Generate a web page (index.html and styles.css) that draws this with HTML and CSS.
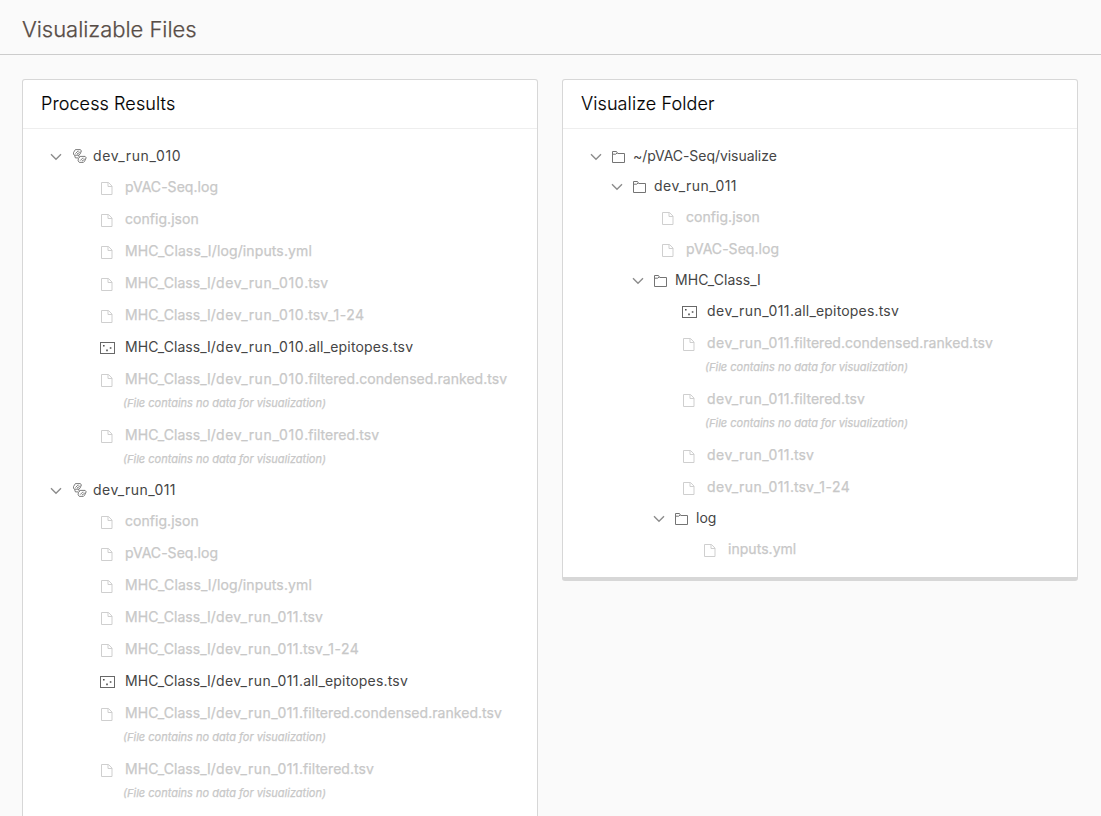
FILE: index.html
```
<!DOCTYPE html>
<html lang="en">
<head>
<meta charset="utf-8">
<title>Visualizable Files</title>
<link rel="stylesheet" href="styles.css">
</head>
<body>
<svg class="sprite" aria-hidden="true">
  <symbol id="chevron" viewBox="0 0 12 8"><path d="M1 1.3 6 6.3l5-5" fill="none" stroke="#8c8c8c" stroke-width="1.4"/></symbol>
  <symbol id="folder" viewBox="0 0 13 12"><path d="M.5 11.5V.5h4l1.2 2h6.8v9zM.5 3.2h3.2l1.4-1.2" fill="none" stroke="#747474"/></symbol>
  <symbol id="file" viewBox="0 0 12 13"><path d="M.5.5h7l3.5 3.6v8.4H.5zM7 .5v4h4" fill="none" stroke="#cfcfcf"/></symbol>
  <symbol id="plot" viewBox="0 0 15 12"><rect x=".5" y=".5" width="14" height="11" fill="none" stroke="#686868"/><path d="M3 3h1.6v1.6H3zM9.8 5.2h1.6v1.6H9.8zM6.2 7.6h1.6v1.6H6.2z" fill="#505050"/></symbol>
  <symbol id="link" viewBox="0 0 14 14"><g fill="none" stroke="#5c5c5c" stroke-width=".8"><path d="M.6 3.4 2.4.6h5l1 1.4-1.4 3.2-1.3 1H1.4L.4 5zM2.4 4.6l2.4-2.4h.9M4 4.8h1l2-2.2"/><path d="M5.4 9.6 7.2 7.4h4.9l1.1 1.4-1.6 3.4-1.2 1.2H6.3l-1.2-1.6zM7.2 11.6l2.4-2.4h.9M8.9 11.8h1l2-2.2M5.6 6.2l.7 2M1.6 6.4l.8 2.5h2.8"/></g></symbol>
</svg>

<header class="page-header"><h1 class="page-title">Visualizable Files</h1></header>

<main class="panels">
  <section class="panel">
    <h2 class="panel-title">Process Results</h2>
    <div class="tree">
      <div class="dir"><svg class="chevron"><use href="#chevron"/></svg><svg class="link"><use href="#link"/></svg><span class="label"><span class="run-a">dev_run_010</span></span></div>
      <ul class="files">
        <li class="file"><svg class="doc"><use href="#file"/></svg><span class="label">pVAC-Seq.log</span></li>
        <li class="file"><svg class="doc"><use href="#file"/></svg><span class="label">config.json</span></li>
        <li class="file"><svg class="doc"><use href="#file"/></svg><span class="label mhc">MHC_Class_I/log/inputs.yml</span></li>
        <li class="file"><svg class="doc"><use href="#file"/></svg><span class="label">MHC_Class_I/<span class="run-a">dev_run_010</span>.tsv</span></li>
        <li class="file"><svg class="doc"><use href="#file"/></svg><span class="label">MHC_Class_I/<span class="run-a">dev_run_010</span>.tsv<span class="range">_1-24</span></span></li>
        <li class="file active"><svg class="plot"><use href="#plot"/></svg><span class="label">MHC_Class_I/<span class="run-a">dev_run_010</span><span class="epitopes">.all_epitopes.tsv</span></span></li>
        <li class="file"><svg class="doc"><use href="#file"/></svg><span class="label">MHC_Class_I/<span class="run-a">dev_run_010</span>.filtered.condensed.ranked.tsv</span></li>
        <li class="note"><span>(File contains no data for visualization)</span></li>
        <li class="file"><svg class="doc"><use href="#file"/></svg><span class="label">MHC_Class_I/<span class="run-a">dev_run_010</span>.filtered.tsv</span></li>
        <li class="note"><span>(File contains no data for visualization)</span></li>
      </ul>
      <div class="dir"><svg class="chevron"><use href="#chevron"/></svg><svg class="link"><use href="#link"/></svg><span class="label"><span class="run-b">dev_run_011</span></span></div>
      <ul class="files">
        <li class="file"><svg class="doc"><use href="#file"/></svg><span class="label">config.json</span></li>
        <li class="file"><svg class="doc"><use href="#file"/></svg><span class="label">pVAC-Seq.log</span></li>
        <li class="file"><svg class="doc"><use href="#file"/></svg><span class="label mhc">MHC_Class_I/log/inputs.yml</span></li>
        <li class="file"><svg class="doc"><use href="#file"/></svg><span class="label">MHC_Class_I/<span class="run-b">dev_run_011</span>.tsv</span></li>
        <li class="file"><svg class="doc"><use href="#file"/></svg><span class="label">MHC_Class_I/<span class="run-b">dev_run_011</span>.tsv<span class="range">_1-24</span></span></li>
        <li class="file active"><svg class="plot"><use href="#plot"/></svg><span class="label">MHC_Class_I/<span class="run-b">dev_run_011</span><span class="epitopes">.all_epitopes.tsv</span></span></li>
        <li class="file"><svg class="doc"><use href="#file"/></svg><span class="label">MHC_Class_I/<span class="run-b">dev_run_011</span>.filtered.condensed.ranked.tsv</span></li>
        <li class="note"><span>(File contains no data for visualization)</span></li>
        <li class="file"><svg class="doc"><use href="#file"/></svg><span class="label">MHC_Class_I/<span class="run-b">dev_run_011</span>.filtered.tsv</span></li>
        <li class="note"><span>(File contains no data for visualization)</span></li>
      </ul>
    </div>
  </section>

  <section class="panel">
    <h2 class="panel-title">Visualize Folder</h2>
    <div class="tree">
      <div class="dir"><svg class="chevron"><use href="#chevron"/></svg><svg class="folder"><use href="#folder"/></svg><span class="label root">~/pVAC-Seq/visualize</span></div>
      <div class="branch">
        <div class="dir"><svg class="chevron"><use href="#chevron"/></svg><svg class="folder"><use href="#folder"/></svg><span class="label"><span class="run-b">dev_run_011</span></span></div>
        <ul class="files">
          <li class="file"><svg class="doc"><use href="#file"/></svg><span class="label">config.json</span></li>
          <li class="file"><svg class="doc"><use href="#file"/></svg><span class="label">pVAC-Seq.log</span></li>
        </ul>
        <div class="branch">
          <div class="dir"><svg class="chevron"><use href="#chevron"/></svg><svg class="folder"><use href="#folder"/></svg><span class="label">MHC_Class_I</span></div>
          <ul class="files">
            <li class="file active"><svg class="plot"><use href="#plot"/></svg><span class="label"><span class="run-b">dev_run_011</span><span class="epitopes">.all_epitopes.tsv</span></span></li>
            <li class="file"><svg class="doc"><use href="#file"/></svg><span class="label"><span class="run-b">dev_run_011</span>.filtered.condensed.ranked.tsv</span></li>
            <li class="note"><span>(File contains no data for visualization)</span></li>
            <li class="file"><svg class="doc"><use href="#file"/></svg><span class="label"><span class="run-b">dev_run_011</span>.filtered.tsv</span></li>
            <li class="note"><span>(File contains no data for visualization)</span></li>
            <li class="file"><svg class="doc"><use href="#file"/></svg><span class="label"><span class="run-b">dev_run_011</span>.tsv</span></li>
            <li class="file"><svg class="doc"><use href="#file"/></svg><span class="label"><span class="run-b">dev_run_011</span>.tsv<span class="range">_1-24</span></span></li>
          </ul>
          <div class="branch">
            <div class="dir"><svg class="chevron"><use href="#chevron"/></svg><svg class="folder"><use href="#folder"/></svg><span class="label">log</span></div>
            <ul class="files">
              <li class="file"><svg class="doc"><use href="#file"/></svg><span class="label">inputs.yml</span></li>
            </ul>
          </div>
        </div>
      </div>
    </div>
  </section>
</main>
</body>
</html>
```
FILE: styles.css
```
* { box-sizing: border-box; }
body {
  margin: 0;
  height: 816px;
  overflow: hidden;
  background: #fafafa;
  color: #454545;
  font-family: Inter, "Liberation Sans", sans-serif;
  font-size: 14px;
}
svg { display: block; flex: none; }
.sprite { display: none; }
.page-header {
  height: 55px;
  padding: 14px 22px 0;
  border-bottom: 1px solid #ccc;
}
.page-title {
  margin: 0;
  font-size: 22px;
  line-height: 30px;
  font-weight: 300;
  letter-spacing: -0.04px;
  color: #574c46;
  -webkit-text-stroke: 0.25px;
}
.panels {
  display: grid;
  grid-template-columns: 516px 516px;
  gap: 24px;
  align-items: start;
  padding: 24px 22px;
}
.panel {
  background: #fff;
  border: 1px solid #d7d7d7;
  border-bottom-width: 4px;
  border-radius: 3px;
}
.panel-title {
  margin: 0;
  height: 49px;
  padding-left: 18px;
  border-bottom: 1px solid #eee;
  font-size: 18px;
  line-height: 48px;
  font-weight: 300;
  letter-spacing: 0.1px;
  color: #000;
  -webkit-text-stroke: 0.15px;
}
.tree { padding: 12px 0 12px 27px; }
.dir {
  display: flex;
  align-items: center;
  height: 30px;
  white-space: nowrap;
}
.label { padding-bottom: 2px; letter-spacing: 0.04px; }
.root { letter-spacing: -0.05px; }
.mhc { letter-spacing: 0.12px; }
.run-a { letter-spacing: 0.66px; }
.run-b { letter-spacing: 0.47px; }
.epitopes { letter-spacing: 0.18px; }
.range { letter-spacing: 0.5px; }
.chevron { width: 12px; height: 8px; margin: 1px 10px 0 0; }
.link { width: 14px; height: 14px; margin: 0 6px 0 1px; }
.folder { width: 13px; height: 12px; margin: 2px 8px 0 0; }
.branch { padding-left: 21px; }
.files {
  margin: 0;
  padding: 0 0 0 50px;
  list-style: none;
  color: #c8c8c8;
  -webkit-text-stroke: 0.25px;
}
.file {
  display: flex;
  align-items: center;
  height: 32px;
  white-space: nowrap;
}
.doc { width: 12px; height: 13px; margin: 3px 12px 0 1px; }
.plot { width: 15px; height: 12px; margin: 2px 10px 0 0; }
.active { color: #454545; -webkit-text-stroke: 0; }
.note {
  height: 24px;
  padding-left: 23px;
  font-size: 11px;
  line-height: 16px;
  font-style: italic;
}
```
